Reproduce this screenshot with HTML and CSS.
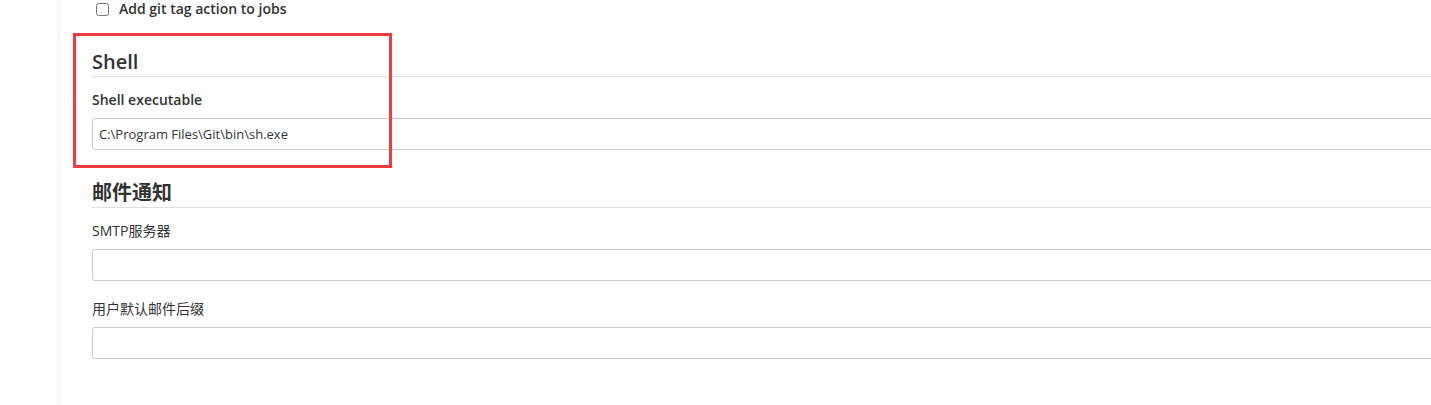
FILE: index.html
```html
<!DOCTYPE html>
<html lang="zh-CN">
<head>
<meta charset="utf-8">
<title>Configure</title>
<link rel="stylesheet" href="styles.css">
</head>
<body>
<div class="page">
  <aside class="sidebar"></aside>
  <main class="main">
    <label class="check-row">
      <input type="checkbox" class="check">
      <span class="check-label">Add git tag action to jobs</span>
    </label>

    <section class="section">
      <h2 class="section-title">Shell</h2>
      <div class="field">
        <div class="field-label bold">Shell executable</div>
        <input class="field-input" type="text" value="C:\Program Files\Git\bin\sh.exe">
      </div>
    </section>

    <section class="section">
      <h2 class="section-title cjk">邮件通知</h2>
      <div class="field">
        <div class="field-label">SMTP服务器</div>
        <input class="field-input" type="text" value="">
      </div>
      <div class="field">
        <div class="field-label">用户默认邮件后缀</div>
        <input class="field-input" type="text" value="">
      </div>
    </section>
  </main>
  <div class="highlight"></div>
</div>
</body>
</html>
```

FILE: styles.css
```css
html, body {
  margin: 0;
  padding: 0;
  background: #fff;
  overflow: hidden;
}
body {
  font-family: "Open Sans", "Noto Sans CJK SC", sans-serif;
  color: #333;
  width: 1431px;
  height: 405px;
}
.page {
  position: relative;
  display: flex;
  height: 405px;
}
.sidebar {
  width: 59px;
  flex: none;
  border-right: 1px solid #f0f0f0;
}
.main {
  flex: 1;
  padding-left: 32px;
  overflow: hidden;
}
.check-row {
  display: flex;
  align-items: center;
  height: 18px;
  padding-left: 4px;
  gap: 10px;
}
.check {
  width: 13px;
  height: 13px;
  margin: 0;
}
.check-label {
  font-size: 14px;
  font-weight: 600;
  line-height: 18px;
}
.section {
  margin-top: 28px;
}
.section + .section {
  margin-top: 27px;
}
.section-title {
  margin: 0;
  font-size: 20px;
  line-height: 28px;
  font-weight: 600;
  padding-top: 2px;
  border-bottom: 1px solid #e0e0e0;
  width: calc(100% + 20px);
  color: #333;
}
.section-title.cjk {
  font-weight: 700;
}
.field {
  margin-top: 13px;
}
.field + .field {
  margin-top: 18px;
}
.field-label {
  font-size: 14px;
  line-height: 20px;
  margin-bottom: 8px;
}
.field-label.bold {
  font-weight: 600;
}
.field-input {
  display: block;
  box-sizing: border-box;
  width: calc(100% + 20px);
  height: 32px;
  margin: 0;
  padding: 0 6px;
  border: 1px solid #ccc;
  border-radius: 3px;
  font-family: "Open Sans", "Noto Sans CJK SC", sans-serif;
  font-size: 13px;
  color: #333;
  outline: none;
}
.highlight {
  position: absolute;
  left: 73px;
  top: 33px;
  width: 319px;
  height: 135px;
  box-sizing: border-box;
  border: 3px solid #f43b3b;
  pointer-events: none;
}
```
